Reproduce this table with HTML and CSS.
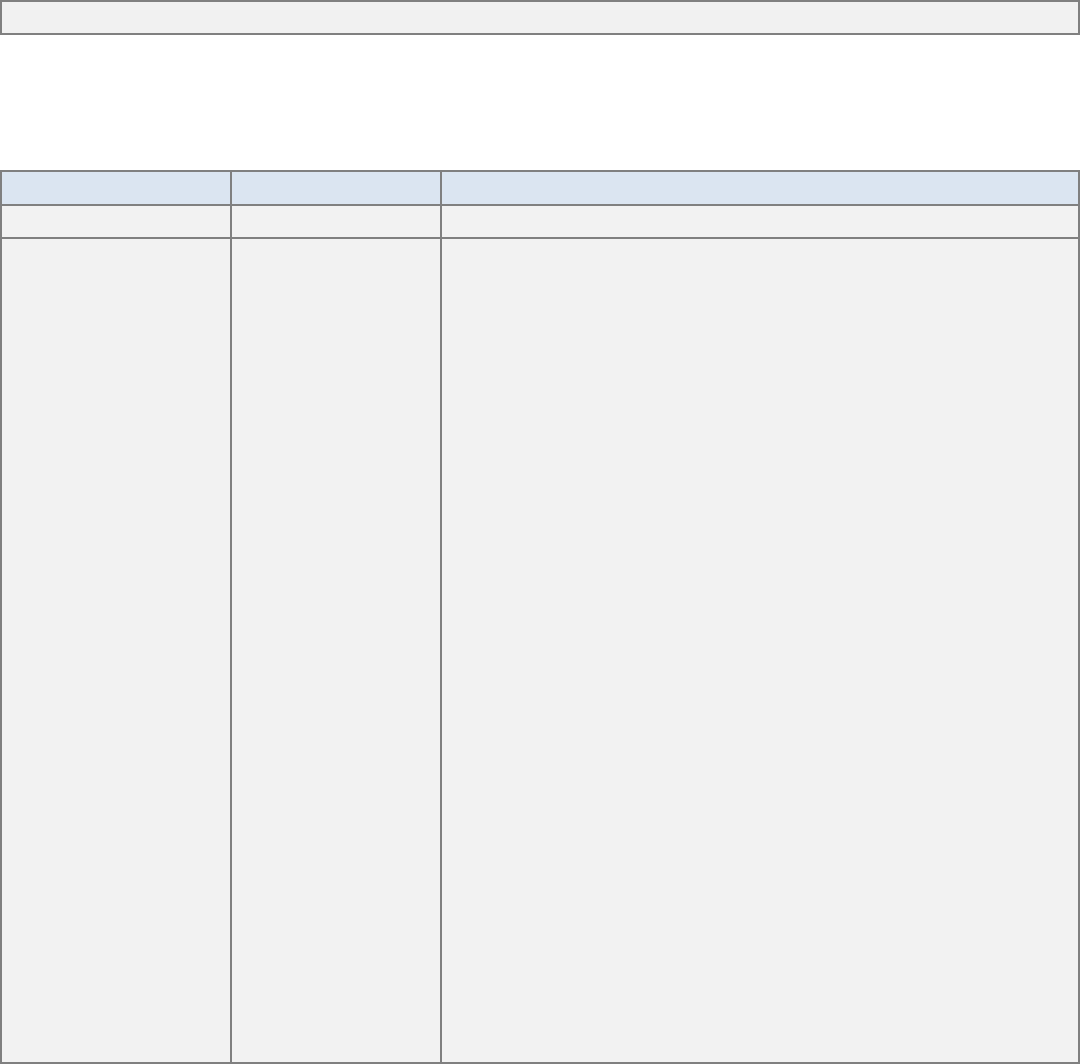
FILE: index.html
```html
<!DOCTYPE html>
<html lang="en">
<head>
    <meta charset="UTF-8">
    <meta name="viewport" content="width=device-width, initial-scale=1.0">
    <title>Sheet</title>
    <link rel="stylesheet" href="styles.css">
</head>
<body>
    <div class="toolbar"></div>
    <table class="sheet">
        <colgroup>
            <col class="col-a">
            <col class="col-b">
            <col class="col-c">
        </colgroup>
        <thead>
            <tr class="head-row">
                <th></th>
                <th></th>
                <th></th>
            </tr>
        </thead>
        <tbody>
            <tr class="short-row">
                <td></td>
                <td></td>
                <td></td>
            </tr>
            <tr class="tall-row">
                <td></td>
                <td></td>
                <td></td>
            </tr>
        </tbody>
    </table>
</body>
</html>
```

FILE: styles.css
```css
body {
    font-family: "Liberation Sans", Arial, sans-serif;
    margin: 0;
    padding: 0;
    background-color: #fff;
}
.toolbar {
    box-sizing: border-box;
    height: 35px;
    border: 2px solid #808080;
    background-color: #f1f1f1;
}
.sheet {
    width: 1080px;
    margin-top: 135px;
    table-layout: fixed;
    border-collapse: separate;
    border-spacing: 0;
    border-top: 2px solid #808080;
    border-left: 2px solid #808080;
}
.col-a {
    width: 230px;
}
.col-b {
    width: 210px;
}
.sheet th, .sheet td {
    box-sizing: border-box;
    padding: 0;
    border-right: 2px solid #808080;
    border-bottom: 2px solid #808080;
    background-color: #f2f2f2;
}
.sheet th {
    background-color: #dbe5f1;
}
.head-row th {
    height: 34px;
}
.short-row td {
    height: 33px;
}
.tall-row td {
    height: 825px;
}
```
